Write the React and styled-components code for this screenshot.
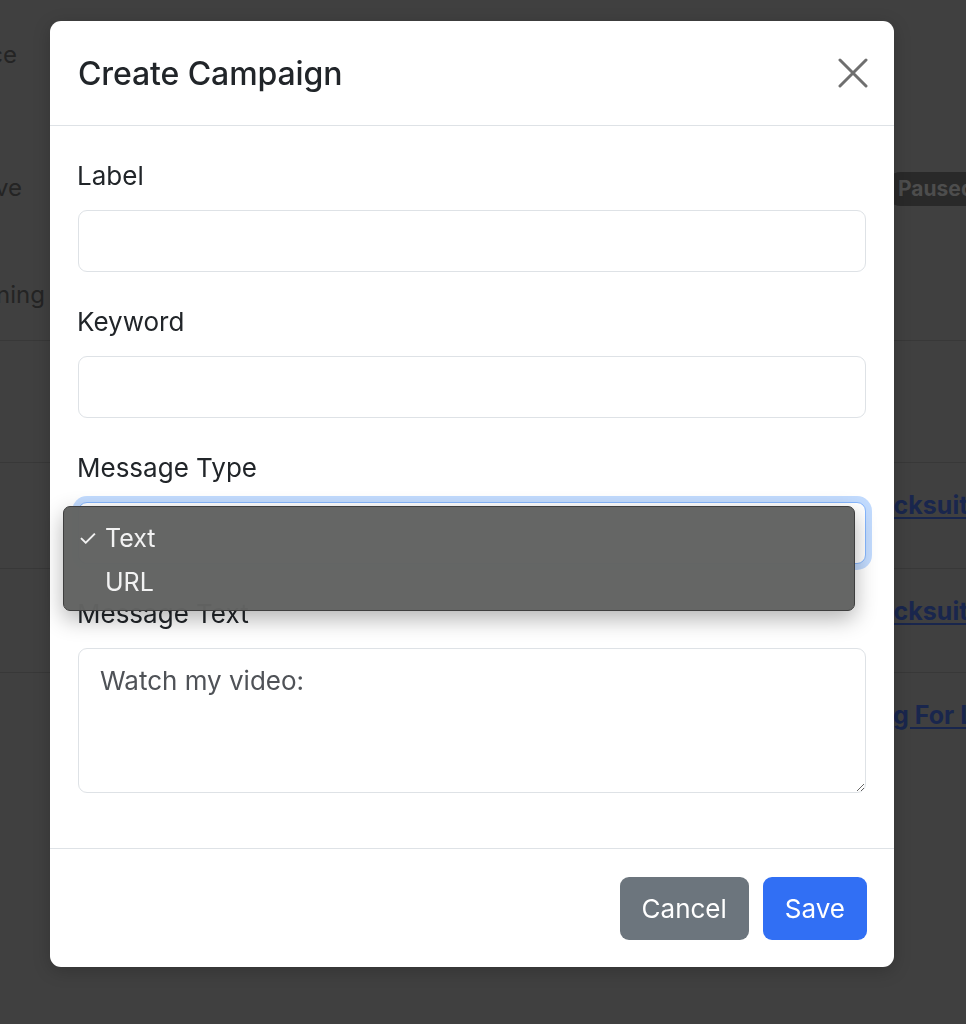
import React from "react";
import styled, { createGlobalStyle } from "styled-components";

const GlobalStyle = createGlobalStyle`
  html, body {
    margin: 0;
    padding: 0;
    background: #404040;
    font-family: Inter, "Noto Sans", "Liberation Sans", sans-serif;
  }
`;

const rows = [
  { height: 120, left: "Balance", inset: 33, top: 37 },
  { height: 130, left: "Active", inset: 28, top: 50, badge: "Paused" },
  { height: 90, left: "Running", inset: 5, top: 27 },
  { height: 122, ruled: true },
  { height: 106, ruled: true, link: "Tracksuit Sale", shift: 36 },
  { height: 104, ruled: true, link: "Tracksuit Promo", shift: 36 },
  { height: 352, ruled: true, link: "Shopping For Less", shift: 98 },
];

const App = () => {
  return (
    <>
      <GlobalStyle />
      <Page>
        {rows.map((row, i) => (
          <BgRow key={i} $height={row.height} $ruled={row.ruled} $top={row.top}>
            <LeftCell $inset={row.inset}>{row.left}</LeftCell>
            <RightCell>
              {row.badge && <Badge>{row.badge}</Badge>}
              {row.link && (
                <BgLink href="#" $shift={row.shift}>
                  {row.link}
                </BgLink>
              )}
            </RightCell>
          </BgRow>
        ))}
      </Page>

      <Overlay>
        <Modal>
          <Header>
            <Title>Create Campaign</Title>
            <Close aria-label="Close">
              <svg width="30" height="30" viewBox="0 0 30 30">
                <path
                  d="M2 2 L28 28 M28 2 L2 28"
                  stroke="#6f6f6f"
                  strokeWidth="3"
                  strokeLinecap="round"
                />
              </svg>
            </Close>
          </Header>

          <Body>
            <Field>
              <Label>Label</Label>
              <Input type="text" />
            </Field>
            <Field>
              <Label>Keyword</Label>
              <Input type="text" />
            </Field>
            <Field>
              <Label>Message Type</Label>
              <SelectWrap>
                <Select />
                <Popup>
                  <Option>
                    <Check>✓</Check>Text
                  </Option>
                  <Option>
                    <Check />
                    URL
                  </Option>
                </Popup>
              </SelectWrap>
            </Field>
            <Field>
              <Label>Message Text</Label>
              <Textarea defaultValue="Watch my video:" />
            </Field>
          </Body>

          <Footer>
            <Button $variant="secondary">Cancel</Button>
            <Button $variant="primary">Save</Button>
          </Footer>
        </Modal>
      </Overlay>
    </>
  );
};

const Page = styled.div`
  width: 966px;
  height: 1024px;
  overflow: hidden;
  display: flex;
  flex-direction: column;
  background: #404040;
  font-size: 24px;
  color: #242424;
`;

const BgRow = styled.div`
  height: ${(p) => p.$height}px;
  flex-shrink: 0;
  display: flex;
  justify-content: space-between;
  align-items: flex-start;
  box-sizing: border-box;
  padding-top: ${(p) => p.$top || 24}px;
  border-top: ${(p) => (p.$ruled ? "1.5px solid #383838" : "none")};
`;

const LeftCell = styled.div`
  width: 50px;
  flex-shrink: 0;
  overflow: hidden;
  display: flex;
  justify-content: flex-end;
  white-space: nowrap;
  padding-right: ${(p) => p.$inset || 0}px;
  box-sizing: border-box;
  line-height: 36px;
`;

const RightCell = styled.div`
  width: 76px;
  flex-shrink: 0;
  overflow: hidden;
  white-space: nowrap;
  line-height: 36px;
`;

const Badge = styled.span`
  display: inline-block;
  margin-left: -6px;
  padding: 0 14px;
  height: 34px;
  line-height: 34px;
  border-radius: 17px;
  background: #292929;
  color: #4d4d4d;
  font-weight: 700;
  font-size: 21px;
`;

const BgLink = styled.a`
  display: inline-block;
  margin-left: -${(p) => p.$shift}px;
  color: #19264d;
  font-weight: 700;
  font-size: 25px;
  text-decoration: underline;
  text-underline-offset: 3px;
`;

const Overlay = styled.div`
  position: fixed;
  inset: 0;
  padding: 21px 0 0 50px;
`;

const Modal = styled.div`
  width: 844px;
  height: 946px;
  background: #fff;
  border-radius: 11px;
  display: flex;
  flex-direction: column;
  box-shadow: 0 4px 18px rgba(0, 0, 0, 0.2);
  color: #212529;
`;

const Header = styled.div`
  height: 105px;
  box-sizing: border-box;
  padding: 0 26px 0 28px;
  display: flex;
  align-items: center;
  justify-content: space-between;
  border-bottom: 1.5px solid #dee2e6;
`;

const Title = styled.h5`
  margin: 0;
  font-size: 32px;
  font-weight: 500;
  letter-spacing: -0.1px;
`;

const Close = styled.button`
  border: none;
  background: none;
  padding: 0;
  width: 30px;
  height: 30px;
  display: flex;
`;

const Body = styled.div`
  flex: 1;
  padding: 32px 28px 0;
  display: flex;
  flex-direction: column;
  gap: 32px;
`;

const Field = styled.div`
  display: flex;
  flex-direction: column;
`;

const Label = styled.label`
  font-size: 26px;
  line-height: 36px;
  margin-bottom: 16px;
  margin-left: -1px;
`;

const Input = styled.input`
  height: 62px;
  box-sizing: border-box;
  border: 1.5px solid #dee2e6;
  border-radius: 9px;
  padding: 0 22px;
  font-size: 24px;
  outline: none;
`;

const SelectWrap = styled.div`
  position: relative;
`;

const Select = styled.div`
  height: 62px;
  box-sizing: border-box;
  border: 1.5px solid #86b7fe;
  border-radius: 9px;
  box-shadow: 0 0 0 6px rgba(13, 110, 253, 0.25);
  background: #fff;
`;

const Popup = styled.div`
  position: absolute;
  left: -15px;
  top: 4px;
  width: 792px;
  height: 105px;
  box-sizing: border-box;
  padding-top: 9px;
  background: rgba(98, 99, 98, 0.98);
  border: 1px solid #3e3e3e;
  border-radius: 7px;
  box-shadow: 0 8px 22px rgba(0, 0, 0, 0.3);
  color: #f2f2f2;
  font-size: 25px;
`;

const Option = styled.div`
  height: 44px;
  display: flex;
  align-items: center;
  padding-left: 14px;
`;

const Check = styled.span`
  width: 27px;
  font-size: 22px;
`;

const Textarea = styled.textarea`
  height: 145px;
  box-sizing: border-box;
  border: 1.5px solid #dee2e6;
  border-radius: 9px;
  padding: 14px 21px;
  font-family: inherit;
  font-size: 26px;
  line-height: 36px;
  color: #4f5257;
  resize: vertical;
  outline: none;
`;

const Footer = styled.div`
  height: 119px;
  box-sizing: border-box;
  border-top: 1.5px solid #dee2e6;
  display: flex;
  justify-content: flex-end;
  align-items: flex-start;
  gap: 14px;
  padding: 28px 27px 0;
`;

const Button = styled.button`
  height: 63px;
  border: none;
  border-radius: 9px;
  padding: 0 22px;
  font-family: inherit;
  font-size: 26px;
  color: #fff;
  background: ${(p) => (p.$variant === "primary" ? "#316ff4" : "#6c757d")};
`;

export default App;
